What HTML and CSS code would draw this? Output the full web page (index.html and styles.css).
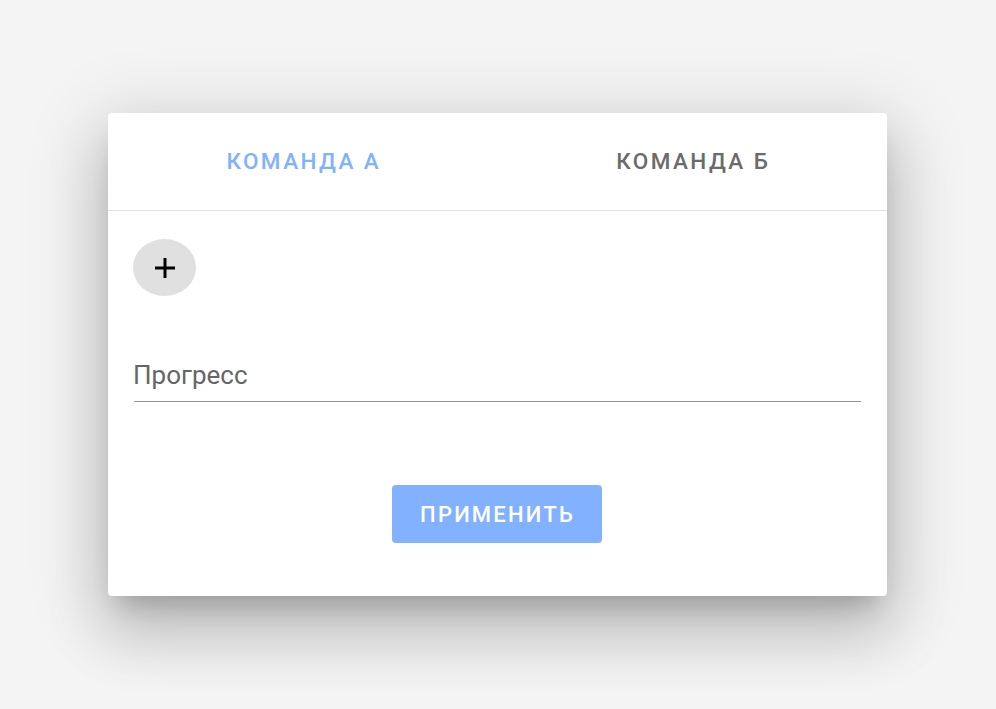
FILE: index.html
```html
<!DOCTYPE html>
<html lang="ru">
<head>
<meta charset="utf-8">
<title>Команды</title>
<link rel="stylesheet" href="styles.css">
</head>
<body>
<div class="stage">
  <div class="card">
    <div class="tabs">
      <div class="tab tab-active">КОМАНДА А</div>
      <div class="tab">КОМАНДА Б</div>
    </div>
    <div class="content">
      <button class="fab" type="button" aria-label="Добавить">
        <svg class="fab-icon" viewBox="0 0 20 20" width="20" height="20"><rect x="0" y="8.5" width="20" height="3" fill="#000"/><rect x="8.5" y="0" width="3" height="20" fill="#000"/></svg>
      </button>
      <div class="field">
        <span class="field-label">Прогресс</span>
      </div>
      <div class="actions">
        <button class="apply" type="button">ПРИМЕНИТЬ</button>
      </div>
    </div>
  </div>
</div>
</body>
</html>
```

FILE: styles.css
```css
html, body {
  margin: 0;
  padding: 0;
  height: 100%;
}
body {
  background: #f4f4f4;
  font-family: Roboto, "Noto Sans", "Liberation Sans", sans-serif;
}
.stage {
  height: 100vh;
  display: flex;
  align-items: center;
  justify-content: center;
  padding-right: 1px;
}
.card {
  width: 779px;
  height: 483px;
  box-sizing: border-box;
  background: #fff;
  border-radius: 4px;
  display: flex;
  flex-direction: column;
  box-shadow: 0 18px 24px -11px rgba(0,0,0,.2),
              0 38px 61px 5px rgba(0,0,0,.14),
              0 14px 74px 13px rgba(0,0,0,.12);
}
.tabs {
  display: grid;
  grid-template-columns: 1fr 1fr;
  height: 97px;
  border-bottom: 1px solid #e2e2e2;
}
.tab {
  display: flex;
  align-items: center;
  justify-content: center;
  font-size: 22.5px;
  font-weight: 500;
  letter-spacing: 2.4px;
  color: #6b6b6b;
  padding-bottom: 1px;
  padding-left: 2px;
}
.tab-active {
  color: #82b1ff;
}
.content {
  padding: 28px 26px 0 25px;
  display: flex;
  flex-direction: column;
  align-items: flex-start;
}
.fab {
  width: 63px;
  height: 57px;
  border: none;
  border-radius: 50%;
  background: #e0e0e0;
  padding: 0;
  display: flex;
  align-items: center;
  justify-content: center;
}
.fab-icon {
  display: block;
}
.field {
  align-self: stretch;
  margin-top: 64px;
  margin-left: 1px;
  padding-bottom: 11px;
  border-bottom: 1px solid #939393;
}
.field-label {
  display: block;
  font-size: 26px;
  line-height: 30px;
  color: #666;
  margin-left: -1px;
}
.actions {
  align-self: stretch;
  display: flex;
  justify-content: center;
  margin-top: 83px;
}
.apply {
  height: 58px;
  width: 210px;
  border: none;
  border-radius: 4px;
  background: #82b1ff;
  color: #fff;
  font-family: Roboto, "Noto Sans", "Liberation Sans", sans-serif;
  font-size: 22px;
  font-weight: 500;
  letter-spacing: 2.2px;
  padding: 0 0 0 2px;
  margin-left: -1px;
}
```
